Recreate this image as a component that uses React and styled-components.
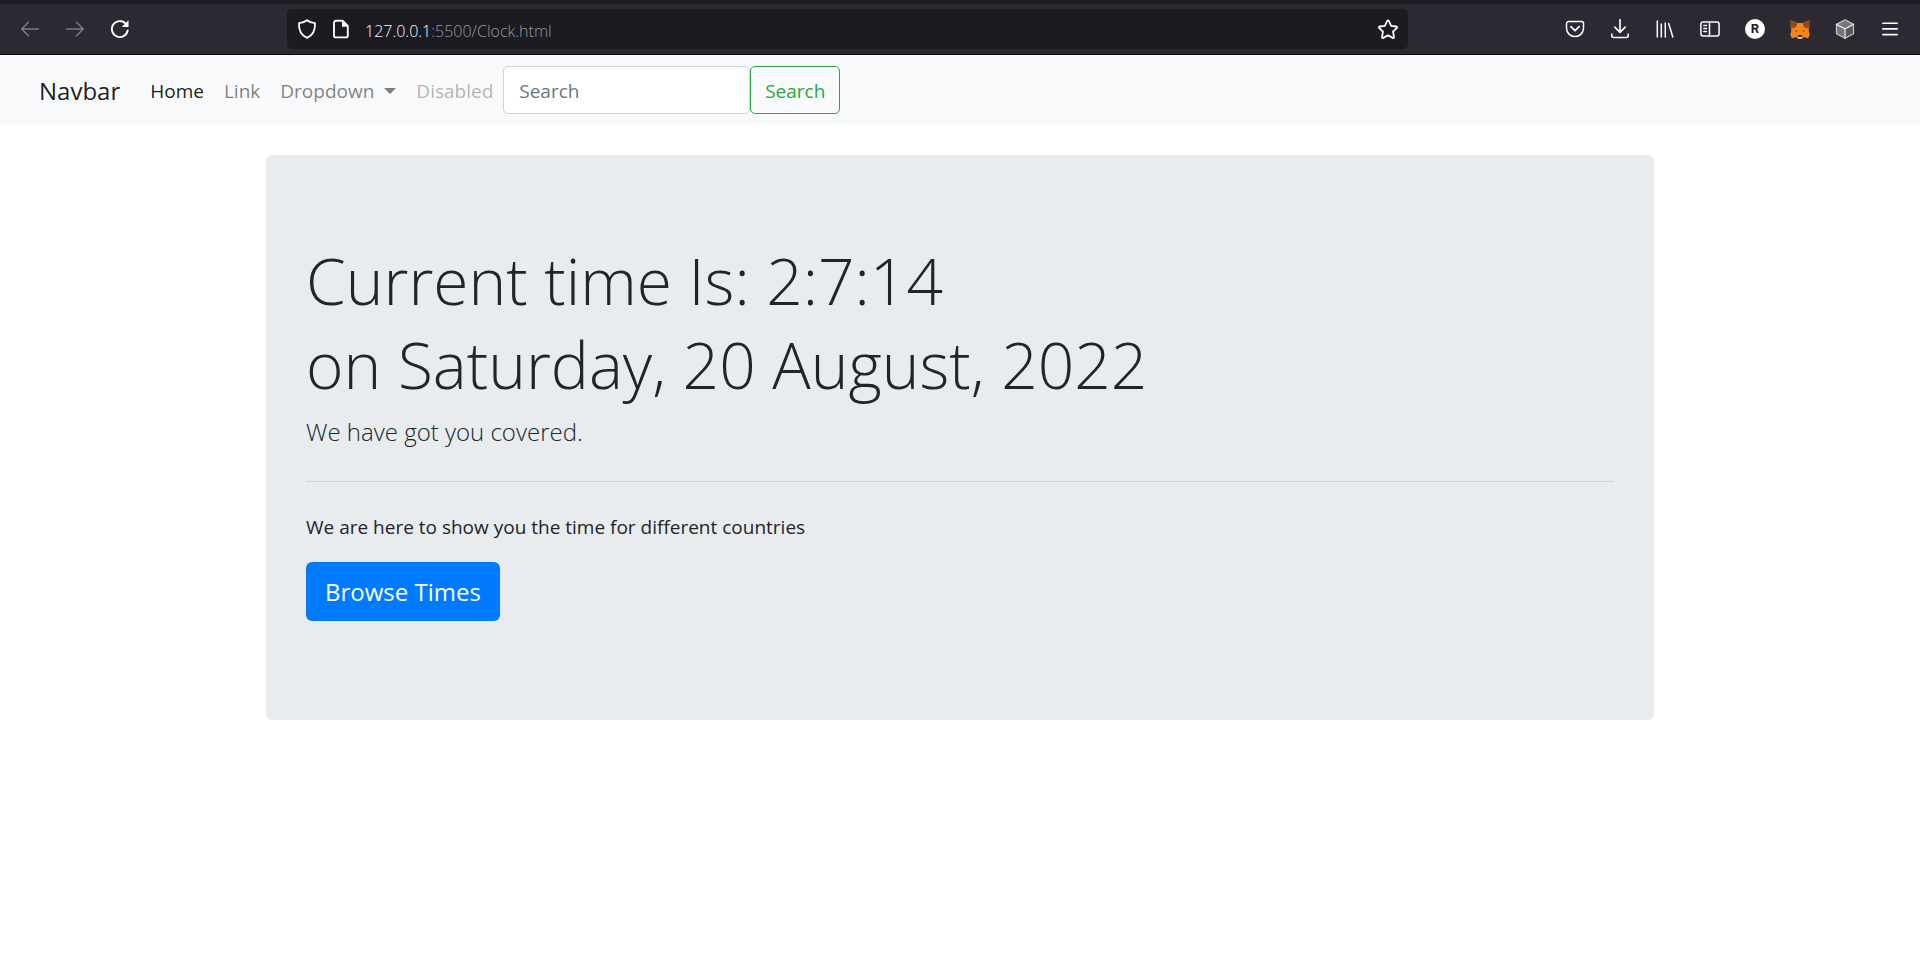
import React from "react";
import styled, { createGlobalStyle, css } from "styled-components";

const GlobalStyle = createGlobalStyle`
  *, *::before, *::after { box-sizing: border-box; }
  body {
    margin: 0;
    background: #fff;
    color: #212529;
    font-family: "Open Sans", "Noto Sans", sans-serif;
    font-size: 19px;
    line-height: 30px;
  }
  h1, p, ul { margin: 0; padding: 0; }
  button, input { font: inherit; }
`;

/* ---------- browser toolbar ---------- */

const Toolbar = styled.header`
  display: flex;
  align-items: center;
  height: 55px;
  padding: 0 10px;
  background: #2b2a33;
  border-top: 4px solid #1c1b22;
  border-bottom: 1px solid #0c0c0d;
`;

const ToolGroup = styled.div`
  display: flex;
  gap: 5px;
`;

const ToolButton = styled.button`
  display: flex;
  align-items: center;
  justify-content: center;
  width: 40px;
  height: 40px;
  padding: 0;
  border: 0;
  background: none;
  color: ${(p) => (p.disabled ? "#7f7e85" : "#fbfbfe")};
`;

const AddressBar = styled.div`
  display: flex;
  flex: 1;
  align-items: center;
  gap: 14px;
  height: 40px;
  margin: 0 147px;
  padding: 0 10px;
  border-radius: 5px;
  background: #1c1b22;
  color: #fbfbfe;
`;

const Address = styled.span`
  flex: 1;
  padding-top: 3px;
  font-size: 16px;
  font-weight: 300;
  line-height: 24px;
  color: #9a999f;
`;

const Host = styled.span`
  color: #fbfbfe;
`;

/* ---------- page navigation ---------- */

const Navbar = styled.nav`
  display: flex;
  align-items: center;
  height: 70px;
  padding: 0 39px;
  background: #f8f9fa;
`;

const Brand = styled.a`
  margin-right: 20px;
  padding-top: 2px;
  color: rgba(0, 0, 0, 0.9);
  font-size: 24px;
  text-decoration: none;
`;

const NavList = styled.ul`
  display: flex;
  list-style: none;
`;

const linkStyle = css`
  display: flex;
  align-items: center;
  gap: 10px;
  padding: 11px 10px 9px;
  border: 0;
  background: none;
  text-decoration: none;
  color: rgba(0, 0, 0, ${(p) => ({ active: 0.9, disabled: 0.3 })[p.$state] || 0.5});
`;

const NavLink = styled.a`${linkStyle}`;
const NavToggle = styled.button`${linkStyle}`;

const Caret = styled.span`
  border: 6px solid transparent;
  border-top-color: currentColor;
  border-bottom: 0;
`;

const SearchForm = styled.form`
  display: flex;
`;

const SearchInput = styled.input`
  width: 247px;
  height: 48px;
  padding: 2px 15px 0;
  border: 1px solid #ced4da;
  border-radius: 5px;
  background: #fff;
  color: #495057;
  &::placeholder { color: #6c757d; opacity: 1; }
`;

const SearchButton = styled.button`
  width: 90px;
  height: 48px;
  padding: 2px 0 0;
  border: 1px solid #28a745;
  border-radius: 5px;
  background: transparent;
  color: #28a745;
`;

/* ---------- clock panel ---------- */

const Container = styled.main`
  max-width: 1428px;
  margin: 0 auto;
  padding: 30px 20px;
`;

const Jumbotron = styled.section`
  padding: 84px 40px 99px;
  border-radius: 6px;
  background: #e8ecef;
`;

const Title = styled.h1`
  margin-bottom: 6px;
  font-size: 64px;
  font-weight: 300;
  line-height: 84px;
`;

const Lead = styled.p`
  font-size: 24px;
  font-weight: 300;
  line-height: 38px;
`;

const Divider = styled.hr`
  margin: 30px 0;
  border: 0;
  border-top: 1px solid #d0d3d7;
`;

const Text = styled.p`
  margin-bottom: 20px;
`;

const PrimaryButton = styled.a`
  display: inline-flex;
  align-items: center;
  height: 59px;
  padding: 0 19px;
  border-radius: 6px;
  background: #007bff;
  color: #fff;
  font-size: 24px;
  text-decoration: none;
  vertical-align: top;
`;

/* ---------- icons ---------- */

const Svg = styled.svg`
  display: block;
  flex: none;
  width: 20px;
  height: 20px;
  fill: none;
  stroke: currentColor;
  stroke-width: 1.5;
  stroke-linecap: round;
  stroke-linejoin: round;
`;

const Icon = ({ children }) => (
  <Svg viewBox="0 0 20 20" aria-hidden="true">{children}</Svg>
);

const BackIcon = () => <Icon><path d="M18.500 10H2M8.500 3.200 1.700 10l6.800 6.800" /></Icon>;
const ForwardIcon = () => <Icon><path d="M1.500 10H18M11.500 3.200 18.300 10l-6.800 6.800" /></Icon>;
const ReloadIcon = () => (
  <Icon>
    <path strokeWidth="1.900" d="M17.700 11.500A8 8 0 1 1 15.600 4.500" />
    <path fill="currentColor" stroke="none" d="M18.500 1.200v6.300a.6.6 0 0 1-.6.6h-6.200z" />
  </Icon>
);
const ShieldIcon = () => (
  <Icon><path strokeWidth="1.800" d="M10 1.200c2.300 1.900 5 2.700 8 3 .4 6.500-2.300 12-8 14.700C4.300 16.200 1.600 10.700 2 4.200c3-.3 5.700-1.100 8-3z" /></Icon>
);
const PageIcon = () => (
  <Icon>
    <path strokeWidth="1.900" d="M5 1.800h6.800l5 5v9.600a2 2 0 0 1-2 2H5a2 2 0 0 1-2-2V3.800a2 2 0 0 1 2-2z" />
    <path fill="currentColor" stroke="none" d="M11 1.500v6.300h6.300z" />
  </Icon>
);
const StarIcon = () => (
  <Icon><path strokeWidth="1.800" d="M10 1.300c.4 0 .7.300.9.700l2.200 4.900 5 .6c.9.100 1.200 1 .6 1.600l-3.700 3.600 1 5.200c.2.900-.7 1.400-1.400 1L10 16.300l-4.600 2.600c-.7.400-1.600-.1-1.400-1l1-5.200L1.300 9.100c-.6-.6-.3-1.500.6-1.600l5-.6L9.100 2c.2-.4.500-.7.9-.7z" /></Icon>
);
const PocketIcon = () => (
  <Icon>
    <path d="M3.500 2.600h13a2 2 0 0 1 2 2v4.500a8.500 8.500 0 0 1-17 0V4.600a2 2 0 0 1 2-2z" />
    <path strokeWidth="1.800" d="m5.800 7.700 4.200 4 4.200-4" />
  </Icon>
);
const DownloadIcon = () => (
  <Icon>
    <path d="M10 .8v12M4.800 8.200l5.200 5.100 5.200-5.100" strokeWidth="1.700" />
    <path d="M1.800 15v1.500a2 2 0 0 0 2 2h12.400a2 2 0 0 0 2-2V15" strokeWidth="1.600" />
  </Icon>
);
const LibraryIcon = () => (
  <Icon><path d="M2.300 2v16M6.300 5v13M10.300 4v14M13.700 4.500 17.800 18" /></Icon>
);
const SidebarIcon = () => (
  <Icon>
    <rect x=".9" y="3" width="18.200" height="14" rx="2.200" />
    <path d="M9.500 3v14" />
    <path strokeWidth="1.300" d="M3.800 6.500h2.800M3.800 9.500h2.800M3.800 12.500h2.800" />
  </Icon>
);
const CubeIcon = () => (
  <Icon>
    <path fill="#77777a" stroke="none" d="m10 .8 8.500 4.600v9.300L10 19.300l-8.500-4.600V5.400z" />
    <path fill="#58585b" stroke="none" d="M10 9.800v9.500l8.500-4.600V5.400z" />
    <path stroke="#c6c6c8" strokeWidth="1.200" d="m10 .8 8.500 4.600v9.300L10 19.300l-8.500-4.600V5.400z" />
    <path stroke="#e6e6e8" strokeWidth="1.300" d="m1.500 5.400 8.500 4.400 8.500-4.400M10 9.800v9.500" />
  </Icon>
);
const FoxIcon = () => (
  <Icon>
    <g stroke="none">
      <path fill="#e8821e" d="M.8 1.200 7.500 4h5l6.700-2.800.2 7.300-.9 3.100 1 3.700-1.300 3.900-4.200-1.100-2 1.400H8l-2-1.400-4.200 1.100L.5 15.300l1-3.700L.6 8.500z" />
      <path fill="#8a4a1c" d="m.8 1.200 6.700 3.300-1.800 3.800-4.500.9L.5 7.500zM19.200 1.200l-6.700 3.300 1.800 3.800 4.500.9.700-1.700z" />
      <path fill="#f6851b" d="M7.500 4.500h5l1.600 5.500-1.600 6h-5l-1.600-6zM.5 15.300l1.100-3.900h4l1.500 4.200L6 18.100l-4.200 1.100zM19.500 15.300l-1.100-3.900h-4l-1.500 4.200 1.100 2.500 4.200 1.100z" />
      <path fill="#3d2a20" d="m5.400 11.200 2 .7-.6 1zM14.600 11.200l-2 .7.6 1zM8.200 15.900h3.600l.4 2H7.800z" />
      <path fill="#d8cfc7" d="m6.800 17.400 1.400.5h3.600l1.400-.5-1.500 2.300H8.300z" />
    </g>
  </Icon>
);
const MenuIcon = () => <Icon><path strokeWidth="1.600" d="M2.800 4.200h14.400M2.800 9.900h14.400M2.800 15.600h14.400" /></Icon>;

const Avatar = styled.span`
  width: 20px;
  height: 20px;
  border-radius: 50%;
  background: #fff;
  color: #1c1b22;
  font: 700 13px/20px Roboto, sans-serif;
  text-align: center;
`;

const extensions = [
  { label: "Save to Pocket", icon: <PocketIcon /> },
  { label: "Downloads", icon: <DownloadIcon /> },
  { label: "Library", icon: <LibraryIcon /> },
  { label: "Sidebars", icon: <SidebarIcon /> },
  { label: "Account", icon: <Avatar>R</Avatar> },
  { label: "MetaMask", icon: <FoxIcon /> },
  { label: "Extension", icon: <CubeIcon /> },
  { label: "Menu", icon: <MenuIcon /> },
];

export default function App() {
  return (
    <>
      <GlobalStyle />
      <Toolbar>
        <ToolGroup>
          <ToolButton aria-label="Back" disabled><BackIcon /></ToolButton>
          <ToolButton aria-label="Forward" disabled><ForwardIcon /></ToolButton>
          <ToolButton aria-label="Reload"><ReloadIcon /></ToolButton>
        </ToolGroup>
        <AddressBar>
          <ShieldIcon />
          <PageIcon />
          <Address><Host>127.0.0.1</Host>:5500/Clock.html</Address>
          <StarIcon />
        </AddressBar>
        <ToolGroup>
          {extensions.map(({ label, icon }) => (
            <ToolButton key={label} aria-label={label}>{icon}</ToolButton>
          ))}
        </ToolGroup>
      </Toolbar>

      <Navbar>
        <Brand href="#">Navbar</Brand>
        <NavList>
          <li><NavLink href="#" $state="active">Home</NavLink></li>
          <li><NavLink href="#">Link</NavLink></li>
          <li><NavToggle type="button">Dropdown<Caret /></NavToggle></li>
          <li><NavLink href="#" $state="disabled" aria-disabled="true">Disabled</NavLink></li>
        </NavList>
        <SearchForm>
          <SearchInput type="search" placeholder="Search" aria-label="Search" />
          <SearchButton type="submit">Search</SearchButton>
        </SearchForm>
      </Navbar>

      <Container>
        <Jumbotron>
          <Title>
            Current time Is: 2:7:14
            <br />
            on Saturday, 20 August, 2022
          </Title>
          <Lead>We have got you covered.</Lead>
          <Divider />
          <Text>We are here to show you the time for different countries</Text>
          <PrimaryButton href="#">Browse Times</PrimaryButton>
        </Jumbotron>
      </Container>
    </>
  );
}
